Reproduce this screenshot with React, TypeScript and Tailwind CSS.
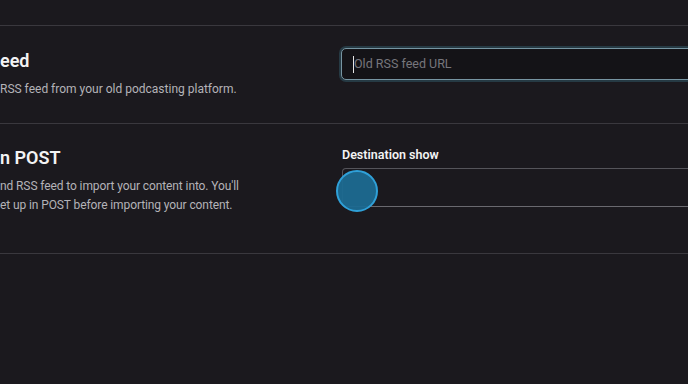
import React from "react";

export default function App() {
  return (
    <div
      className="relative h-[384px] w-[688px] overflow-hidden bg-[#1b191e]"
      style={{ fontFamily: "Roboto, 'Liberation Sans', sans-serif" }}
    >
      <div className="h-[25px]" />
      <div className="w-[780px] border-t border-[#3a383e]">
        <div className="flex pt-[21px] pb-[24px]">
          <div className="w-[341px] shrink-0">
            <h2 className="text-[18px] leading-[28px] font-semibold text-[#f3f3f4]">eed</h2>
            <p className="mt-[4px] text-[12px] leading-[20px] text-[#b4b3b8]">
              RSS feed from your old podcasting platform.
            </p>
          </div>
          <div className="flex-1">
            <div className="mt-[1px] flex h-[32px] items-center rounded-[5px] border border-[#7795a2] bg-[#141317] pl-[11px] shadow-[0_0_0_2px_#263a44]">
              <span className="h-[17px] w-px bg-[#e5e5e5]" />
              <span className="text-[12.5px] text-[#77767c]">Old RSS feed URL</span>
            </div>
          </div>
        </div>
      </div>
      <div className="w-[780px] border-t border-[#3a383e]">
        <div className="flex pt-[20px] pb-[38px]">
          <div className="w-[341px] shrink-0">
            <h2 className="text-[18px] leading-[28px] font-semibold text-[#f3f3f4]">n POST</h2>
            <p className="mt-[5px] text-[12px] leading-[19px] tracking-[-0.1px] text-[#b4b3b8]">
              nd RSS feed to import your content into. You'll
              <br />
              et up in POST before importing your content.
            </p>
          </div>
          <div className="flex-1 pl-px">
            <div className="mt-[1px] text-[12.5px] leading-[20px] font-semibold text-[#f3f3f4]">
              Destination show
            </div>
            <div className="mt-[3px] h-[39px] rounded-[4px] border border-[#55545a] border-b-[#6a696f] bg-[#1b191e]" />
          </div>
        </div>
      </div>
      <div className="w-[780px] border-t border-[#3a383e]" />
      <div className="absolute left-[336px] top-[170px] h-[42px] w-[42px] rounded-full border-2 border-[#2fa0d8] bg-[#1c6a91]/95" />
    </div>
  );
}
